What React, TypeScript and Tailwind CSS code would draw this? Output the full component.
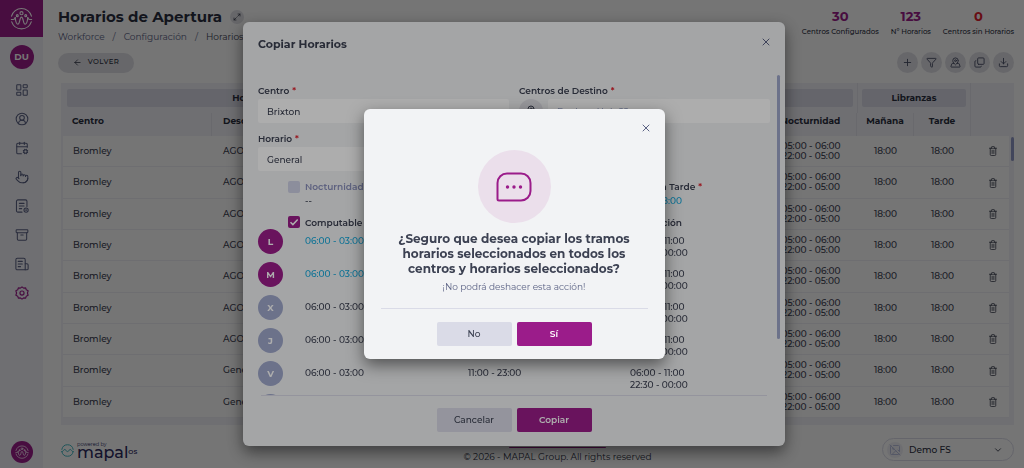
import { useState } from 'react';
import type { ReactNode } from 'react';
import {
  Archive,
  ArrowLeft,
  CalendarCog,
  ChevronDown,
  CircleUserRound,
  Copy,
  Download,
  Funnel,
  ImageOff,
  LayoutDashboard,
  MapPinned,
  Maximize2,
  Pointer,
  Plus,
  X,
} from 'lucide-react';

const rows = ['AGORA', 'AGORA', 'AGORA', 'AGORA', 'AGORA', 'AGORA', 'AGORA', 'General', 'General'];

const days = [
  { letter: 'L', selected: true },
  { letter: 'M', selected: true },
  { letter: 'X', selected: false },
  { letter: 'J', selected: false },
  { letter: 'V', selected: false },
  { letter: 'S', selected: false },
];

const stats = [
  { value: '30', label: 'Centros Configurados', color: 'text-[#9b1c8a]' },
  { value: '123', label: 'Nº Horarios', color: 'text-[#9b1c8a]' },
  { value: '0', label: 'Centros sin Horarios', color: 'text-[#e0202c]' },
];

const menu = [
  { label: 'Panel', icon: LayoutDashboard },
  { label: 'Empleados', icon: CircleUserRound },
  { label: 'Planificación', icon: CalendarCog },
  { label: 'Fichajes', icon: Pointer },
  { label: 'Informes', icon: ReportIcon },
  { label: 'Archivo', icon: Archive },
  { label: 'Noticias', icon: NewsIcon },
];

const actions = [
  { label: 'Añadir', icon: Plus, className: '' },
  { label: 'Filtrar', icon: Funnel, className: '' },
  { label: 'Centros', icon: MapPinned, className: '' },
  { label: 'Copiar', icon: Copy, className: '-scale-y-100' },
  { label: 'Descargar', icon: Download, className: '' },
];

type IconProps = { className?: string; strokeWidth?: number };

function ReportIcon({ className, strokeWidth = 2 }: IconProps) {
  return (
    <svg viewBox="0 0 24 24" fill="none" stroke="currentColor" strokeWidth={strokeWidth} strokeLinecap="round" className={className}>
      <path d="M12 22.500H5a2.500 2.500 0 0 1-2.500-2.500V4A2.500 2.500 0 0 1 5 1.500h13A2.500 2.500 0 0 1 20.500 4v9" />
      <path d="M7.500 7.500h8M7.500 12h8M7.500 16.500h4" />
      <circle cx="19" cy="19" r="3.600" />
      <circle cx="19" cy="19" r=".6" />
    </svg>
  );
}

function NewsIcon({ className, strokeWidth = 2 }: IconProps) {
  return (
    <svg viewBox="0 0 24 24" fill="none" stroke="currentColor" strokeWidth={strokeWidth} strokeLinecap="round" className={className}>
      <path d="M17.500 22H4a2.500 2.500 0 0 1-2.500-2.500v-15A2.500 2.500 0 0 1 4 2h11a2.500 2.500 0 0 1 2.500 2.500V22z" />
      <path d="M17.500 11.500h3a2 2 0 0 1 2 2V20a2 2 0 0 1-2 2h-3" />
      <path d="M5.500 7.500h7M5.500 12h7M5.500 16.500h4" />
    </svg>
  );
}

function TrashIcon() {
  return (
    <svg viewBox="0 0 16 20" fill="none" stroke="currentColor" strokeWidth="1.600" strokeLinecap="round" className="h-[10px] w-2">
      <path d="M1 4.500h14M5 4.500V2.500A1.500 1.500 0 0 1 6.500 1h3A1.500 1.500 0 0 1 11 2.500v2" />
      <path d="M2.500 4.500V17A2 2 0 0 0 4.500 19h7a2 2 0 0 0 2-2V4.500M6.300 8.500v6.500M9.700 8.500v6.500" />
    </svg>
  );
}

function BrandMark({ className }: { className: string }) {
  return (
    <svg viewBox="0 0 24 24" fill="none" stroke="currentColor" strokeWidth="1.2" strokeLinecap="round" className={className}>
      <path d="M1.600 9.500A10.800 10.800 0 0 1 22.400 9.500" />
      <path d="M1.400 13h2c1.300 0 1.700-.8 2-2M22.600 13h-2c-1.300 0-1.700-.8-2-2" />
      <path d="M1.800 15.500A10.800 10.800 0 0 0 22.200 15.500" />
      <path d="M5.400 11c.4 3.500 1 7 2.800 7 2.300 0 1.600-7.400 3.800-7.400s1.500 7.400 3.800 7.400c1.800 0 2.400-3.500 2.800-7" />
      <circle cx="12" cy="6.500" r="1.600" />
      <circle cx="7.600" cy="9" r="1" />
      <circle cx="16.400" cy="9" r="1" />
    </svg>
  );
}

function GearIcon() {
  return (
    <svg viewBox="0 0 24 24" fill="none" stroke="currentColor" strokeWidth="2" strokeLinejoin="round" className="size-[14px]">
      <path d="M12 1.500l2.800 2.200 3.500-.5 1 3.400 3.200 1.600-1.200 3.800 1.200 3.800-3.200 1.600-1 3.400-3.500-.5L12 22.500l-2.800-2.200-3.500.5-1-3.400-3.200-1.600L2.700 12 1.500 8.200l3.200-1.600 1-3.400 3.500.5z" />
      <circle cx="12" cy="12" r="3.500" />
    </svg>
  );
}

function Sidebar() {
  return (
    <aside className="flex w-[43px] shrink-0 flex-col items-center bg-[#f0f0f6] text-[#5b6284]">
      <a href="#" aria-label="Inicio" className="flex h-[37px] w-full items-center justify-center bg-[#9b1c8a] text-white">
        <BrandMark className="size-[23px]" />
      </a>
      <button className="mt-2 flex size-6 items-center justify-center rounded-full bg-[#9b1c8a] text-[9px] font-bold text-white">
        DU
      </button>
      <nav className="mt-[14px] flex flex-col gap-[15px]">
        {menu.map(({ label, icon: Icon }) => (
          <a key={label} href="#" aria-label={label}>
            <Icon className="size-[14px]" strokeWidth={1.8} />
          </a>
        ))}
        <a href="#" aria-label="Configuración" className="text-[#9b1c8a]">
          <GearIcon />
        </a>
      </nav>
      <button
        aria-label="Ayuda"
        className="mt-auto mb-[5px] flex size-[22px] items-center justify-center rounded-full bg-[#9b1c8a] text-white"
      >
        <BrandMark className="size-[14px]" />
      </button>
    </aside>
  );
}

function PageHeader() {
  return (
    <header className="flex justify-between pl-[15px]">
      <div>
        <div className="flex h-[34px] items-center gap-2">
          <h1 className="text-[15px] font-bold">Horarios de Apertura</h1>
          <button aria-label="Ampliar" className="flex size-[14px] items-center justify-center rounded-full bg-[#dfdfe5]">
            <Maximize2 className="size-2" />
          </button>
        </div>
        <nav className="flex h-[6px] items-center gap-2 text-[9px] text-[#5b6284]">
          <a href="#">Workforce</a>
          <span>/</span>
          <a href="#">Configuración</a>
          <span>/</span>
          <a href="#" className="whitespace-nowrap text-[#3c4152]">Horarios de Apertura</a>
        </nav>
      </div>
      <div className="flex gap-3 pt-2 text-center">
        {stats.map((s) => (
          <div key={s.label}>
            <div className={`text-[13px] leading-4 font-bold ${s.color}`}>{s.value}</div>
            <div className="text-[7px] leading-4 font-medium">{s.label}</div>
          </div>
        ))}
      </div>
    </header>
  );
}

function Toolbar() {
  return (
    <div className="mt-3 flex items-center justify-between pl-[15px]">
      <button className="flex h-5 w-[76px] items-center justify-center gap-[6px] rounded-full bg-[#dfdfe5] text-[7px] font-medium tracking-wider">
        <ArrowLeft className="size-[9px]" />
        VOLVER
      </button>
      <div className="flex gap-[3px]">
        {actions.map(({ label, icon: Icon, className }) => (
          <button
            key={label}
            aria-label={label}
            className="flex size-[21px] items-center justify-center rounded-full bg-[#dfdfe5] text-[#4a5068]"
          >
            <Icon className={`size-[11px] ${className}`} />
          </button>
        ))}
      </div>
    </div>
  );
}

function GroupHead({ children }: { children: ReactNode }) {
  return <div className="mx-1 flex h-[18px] items-center justify-center rounded-xs bg-[#dadbe7]">{children}</div>;
}

function ScheduleTable() {
  return (
    <div className="relative mt-[10px] ml-[18px] flex flex-1 bg-[#f0f0f6] pr-[5px] pb-[7px] pl-[2px]">
      <table className="w-full table-fixed border-separate border-spacing-0 text-[9px]">
        <colgroup>
          <col className="w-[149px]" />
          <col className="w-[229px]" />
          <col />
          <col />
          <col className="w-[92px]" />
          <col className="w-[57px]" />
          <col className="w-[57px]" />
          <col className="w-[38px]" />
        </colgroup>
        <thead className="font-semibold">
          <tr className="h-[30px]">
            <th colSpan={2} className="p-0">
              <GroupHead>Horarios</GroupHead>
            </th>
            <th colSpan={3} className="p-0">
              <GroupHead>Tramos</GroupHead>
            </th>
            <th colSpan={2} className="border-x border-[#e2e3ec] p-0">
              <GroupHead>Libranzas</GroupHead>
            </th>
            <th className="p-0" />
          </tr>
          <tr className="h-[23px] text-center">
            <th className="border-r border-[#e2e3ec] p-0 pb-2 pl-[9px] text-left">Centro</th>
            <th className="p-0 pb-2 pl-[11px] text-left">Descripción</th>
            <th className="p-0 pb-2">Computable</th>
            <th className="p-0 pb-2">Planificación</th>
            <th className="border-r border-[#e2e3ec] p-0 pb-2">Nocturnidad</th>
            <th className="border-r border-[#e2e3ec] p-0 pb-2">Mañana</th>
            <th className="border-r border-[#e2e3ec] p-0 pb-2">Tarde</th>
            <th className="p-0 pb-2" />
          </tr>
        </thead>
        <tbody className="bg-[#fcfcfd] text-center leading-[10px] font-medium text-[#3c4152] [&_td]:border-b [&_td]:border-[#eeeef4] [&_td]:p-0">
          {rows.map((name, i) => (
            <tr key={i} className="h-[31px]">
              <td>
                <div className="pl-[10px] text-left">Bromley</div>
              </td>
              <td>
                <div className="pl-[11px] text-left">{name}</div>
              </td>
              <td>06:00 - 03:00</td>
              <td>11:00 - 23:00</td>
              <td>
                05:00 - 06:00
                <br />
                22:00 - 05:00
              </td>
              <td>18:00</td>
              <td>18:00</td>
              <td>
                <div className="pl-[6px]">
                  <button aria-label="Eliminar" className="align-middle">
                    <TrashIcon />
                  </button>
                </div>
              </td>
            </tr>
          ))}
        </tbody>
      </table>
      <div className="absolute top-[54px] right-0 h-6 w-[3px] rounded-full bg-[#8f98c4]" />
    </div>
  );
}

function Footer() {
  return (
    <footer className="flex h-[43px] items-center justify-between pt-[6px] pl-[18px] text-[9px]">
      <div className="flex flex-1 items-center gap-[3px] pt-[2px]">
        <svg viewBox="0 0 24 24" fill="none" stroke="#3fb6bf" strokeWidth="1.800" strokeLinecap="round" className="size-[13px]">
          <path d="M1.500 10A10.700 10.700 0 0 1 22.500 10" />
          <path d="M1.500 14A10.700 10.700 0 0 0 22.500 14" />
          <path d="M1.500 14c4 0 3-4 5.500-4s2 4 5 4 2.500-4 5-4 1.500 4 5.500 4" />
        </svg>
        <div className="text-[#2d2a5e]">
          <div className="text-[5px] leading-[5px]">powered by</div>
          <div className="flex text-[16px] leading-3 font-medium">
            mapal<span className="text-[6px] leading-[10px] font-semibold">OS</span>
          </div>
        </div>
      </div>
      <div className="pl-10 text-center leading-[14px]">
        <a href="#" className="text-[#9b1c8a] underline">Política de Privacidad</a>
        <p>© 2026 - MAPAL Group. All rights reserved</p>
      </div>
      <div className="flex flex-1 justify-end">
        <button className="flex h-[23px] w-[132px] items-center gap-[6px] rounded-full border border-[#dadbe7] pr-[10px] pl-1 font-medium">
          <span className="flex size-4 items-center justify-center rounded-full bg-[#eeeef5] text-[#b9bfdc]">
            <ImageOff className="size-3" />
          </span>
          <span className="flex-1 text-left">Demo FS</span>
          <ChevronDown className="size-[10px]" />
        </button>
      </div>
    </footer>
  );
}

function Required() {
  return <span className="ml-[3px] text-[#e0202c]">*</span>;
}

function CopyModal() {
  const [center, setCenter] = useState('Brixton');
  const [schedule, setSchedule] = useState('General');

  return (
    <section
      role="dialog"
      aria-labelledby="copy-title"
      className="flex w-[542px] max-w-full flex-col overflow-hidden rounded-md bg-[#f2f3f5] text-[9px] font-medium text-[#3c4152] shadow-[0_6px_16px_rgba(0,0,0,0.5)]"
    >
      <header className="flex h-[53px] shrink-0 items-start justify-between pt-[14px] pr-[13px] pl-[15px]">
        <h2 id="copy-title" className="text-[11px] leading-4 font-bold">Copiar Horarios</h2>
        <button aria-label="Cerrar" className="text-[#5b6284]">
          <X className="size-3" />
        </button>
      </header>

      <div className="relative min-h-0 flex-1 overflow-hidden px-[15px]">
        <div className="grid grid-cols-[251px_1fr] gap-x-[10px] pt-[10px]">
          <div>
            <label htmlFor="center" className="block leading-3 font-semibold">
              Centro
              <Required />
            </label>
            <input
              id="center"
              value={center}
              onChange={(e) => setCenter(e.target.value)}
              className="mt-[2px] h-6 w-full rounded-xs bg-white px-[9px]"
            />
            <label htmlFor="schedule" className="mt-[10px] block leading-3 font-semibold">
              Horario
              <Required />
            </label>
            <input
              id="schedule"
              value={schedule}
              onChange={(e) => setSchedule(e.target.value)}
              className="mt-[2px] h-6 w-full rounded-xs bg-white px-[9px]"
            />
          </div>
          <div>
            <label htmlFor="target" className="block leading-3 font-semibold">
              Centros de Destino
              <Required />
            </label>
            <div className="mt-[2px] flex gap-[5px]">
              <button aria-label="Elegir centros" className="flex size-6 items-center justify-center rounded-full bg-[#dfdfe5]">
                <MapPinned className="size-3" />
              </button>
              <input
                id="target"
                placeholder="Bankers Unit 22"
                className="h-6 min-w-0 flex-1 rounded-xs bg-white px-[9px] placeholder:text-[#9fa8cc]"
              />
            </div>
          </div>
        </div>

        <div className="mt-[9px] grid grid-cols-[30px_17px_163px_162px_1fr] leading-[14px]">
          <input id="night" type="checkbox" disabled className="col-start-2 mt-px size-3 appearance-none rounded-xs bg-[#cfd1e6]" />
          <div>
            <label htmlFor="night" className="font-semibold text-[#8b91bd]">Nocturnidad</label>
            <p>--</p>
          </div>
          <div>
            <p className="font-semibold">
              Libranza Mañana
              <Required />
            </p>
            <p className="text-[#14a9dc]">18:00</p>
          </div>
          <div className="w-[72px] text-right whitespace-nowrap">
            <p className="font-semibold">
              a Tarde
              <Required />
            </p>
            <p className="pr-5 text-[#14a9dc]">18:00</p>
          </div>
        </div>

        <div className="mt-2 grid grid-cols-[30px_17px_163px_162px_1fr] leading-[13px] font-semibold">
          <span className="relative col-start-2 size-3">
            <input id="computable" type="checkbox" defaultChecked className="block size-3 appearance-none rounded-xs bg-[#9b1c8a]" />
            <svg viewBox="0 0 12 12" fill="none" stroke="white" strokeWidth="1.500" className="pointer-events-none absolute inset-0 size-3">
              <path d="M2.500 6.200l2.400 2.400 4.800-5" />
            </svg>
          </span>
          <label htmlFor="computable">Computable</label>
          <span>Nocturnidad</span>
          <span className="w-[52px] text-right">Ración</span>
        </div>

        <div className="flex flex-col gap-2 leading-3">
          {days.map((d) => (
            <div key={d.letter} className="grid h-[25px] grid-cols-[47px_163px_162px_1fr]">
              <button
                aria-pressed={d.selected}
                className={`size-[25px] rounded-full font-bold text-white ${d.selected ? 'bg-[#9b1c8a]' : 'bg-[#9fa8cc]'}`}
              >
                {d.letter}
              </button>
              <span className={`pt-[6px] ${d.selected ? 'text-[#14a9dc]' : ''}`}>06:00 - 03:00</span>
              <span className="pt-[6px]">11:00 - 23:00</span>
              <span className="pt-[6px]">
                06:00 - 11:00
                <br />
                22:30 - 00:00
              </span>
            </div>
          ))}
        </div>
        <div className="absolute top-0 right-[5px] h-[264px] w-[3px] rounded-full bg-[#9fa8cc]" />
      </div>

      <footer className="mx-[18px] flex h-[51px] shrink-0 justify-center gap-[5px] border-t border-[#dadbe7] pt-3">
        <button className="h-6 w-[75px] rounded-xs bg-[#dadbe7]">Cancelar</button>
        <button className="h-6 w-[75px] rounded-xs bg-[#9b1c8a] font-semibold text-white">Copiar</button>
      </footer>
    </section>
  );
}

function ConfirmDialog() {
  return (
    <section
      role="alertdialog"
      aria-labelledby="confirm-title"
      className="w-[301px] rounded-md bg-[#f2f3f5] p-[13px] text-center text-[#3c4152] shadow-[0_6px_16px_rgba(0,0,0,0.5)]"
    >
      <button aria-label="Cerrar" className="ml-auto block text-[#5b6284]">
        <X className="size-3" />
      </button>
      <div className="mx-auto mt-4 flex size-[73px] items-center justify-center rounded-full bg-[#ebdfeb]">
        <svg viewBox="0 0 36 30" fill="none" stroke="#9b1c8a" strokeWidth="2" className="h-[30px] w-9">
          <path d="M11 1.500h14a9.500 9.500 0 0 1 9.500 9.500v8a9.500 9.500 0 0 1-9.500 9.500H3a1.500 1.500 0 0 1-1.500-1.500V11A9.500 9.500 0 0 1 11 1.500z" />
          <g fill="#9b1c8a" stroke="none">
            <circle cx="11.500" cy="15" r="1.700" />
            <circle cx="18" cy="15" r="1.700" />
            <circle cx="24.500" cy="15" r="1.700" />
          </g>
        </svg>
      </div>
      <h2 id="confirm-title" className="mt-2 px-4 text-[12px] leading-[15px] font-bold">
        ¿Seguro que desea copiar los tramos horarios seleccionados en todos los centros y horarios seleccionados?
      </h2>
      <p className="mt-1 text-[9px] leading-[14px] text-[#5b6284]">¡No podrá deshacer esta acción!</p>
      <div className="mx-1 mt-[14px] flex justify-center gap-[5px] border-t border-[#dadbe7] pt-[13px] text-[9px] font-medium">
        <button className="h-6 w-[75px] rounded-xs bg-[#dadbe7]">No</button>
        <button className="h-6 w-[75px] rounded-xs bg-[#9b1c8a] font-semibold text-white">Sí</button>
      </div>
    </section>
  );
}

export default function App() {
  return (
    <div className="flex h-screen overflow-hidden bg-[#fcfcfd] font-['Montserrat','Inter',sans-serif] text-[#2b2f40]">
      <Sidebar />
      <main className="flex min-w-0 flex-1 flex-col pr-[10px]">
        <PageHeader />
        <Toolbar />
        <ScheduleTable />
        <Footer />
      </main>
      <div className="fixed inset-0 flex items-stretch justify-center bg-black/32 py-[22px] pl-1">
        <CopyModal />
      </div>
      <div className="fixed inset-0 flex items-center justify-center bg-black/32 pl-1">
        <ConfirmDialog />
      </div>
    </div>
  );
}
